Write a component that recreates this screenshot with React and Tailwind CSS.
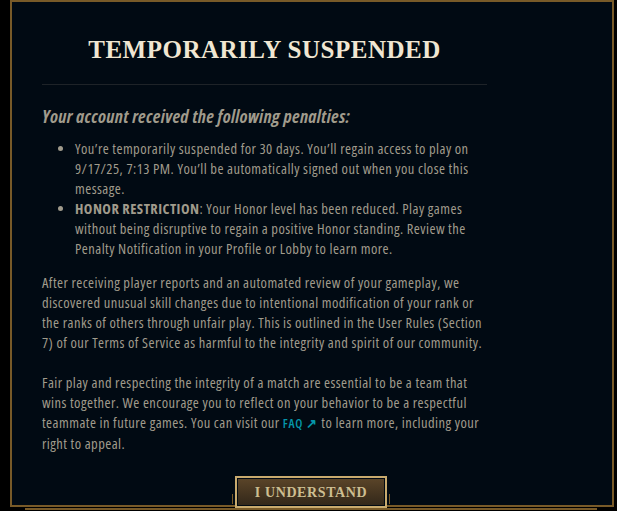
import React from 'react';

export default function App() {
  return (
    <div className="w-[617px] h-[511px] bg-black relative overflow-hidden">
      {/* Frame */}
      <div className="ml-[10px] w-[604px] h-[507px] border-2 border-[#785a28] bg-[#010a13]">
        <div className="pl-[30px] pr-[125px] pt-[30px]">
          <h1 className="text-center font-['Liberation_Serif',serif] text-[25px] leading-[36px] font-bold tracking-[0.5px] text-[#f0e6d2]">
            TEMPORARILY SUSPENDED
          </h1>
          <div className="mt-[16px] h-px bg-[#1e2328]" />

          <h2 className="mt-[20px] font-['Open_Sans',sans-serif] font-stretch-condensed text-[18px] leading-[22px] font-bold italic tracking-[0.3px] text-[#a09b8c]">
            Your account received the following penalties:
          </h2>

          <ul className="mt-[12px] pl-[33px] list-disc font-['Open_Sans',sans-serif] font-stretch-condensed text-[14.5px] leading-[20px] tracking-[0.45px] text-[#a09b8c]">
            <li>
              You’re temporarily suspended for 30 days. You’ll regain access to play on 9/17/25, 7:13 PM. You’ll be
              automatically signed out when you close this message.
            </li>
            <li>
              <span className="font-bold">HONOR RESTRICTION</span>: Your Honor level has been reduced. Play games without
              being disruptive to regain a positive Honor standing. Review the Penalty Notification in your Profile or
              Lobby to learn more.
            </li>
          </ul>

          <p className="mt-[14px] font-['Open_Sans',sans-serif] font-stretch-condensed text-[14.5px] leading-[20px] tracking-[0.45px] text-[#a09b8c]">
            After receiving player reports and an automated review of your gameplay, we discovered unusual skill changes
            due to intentional modification of your rank or the ranks of others through unfair play. This is outlined in
            the User Rules (Section 7) of our Terms of Service as harmful to the integrity and spirit of our community.
          </p>
          <p className="mt-[20px] font-['Open_Sans',sans-serif] font-stretch-condensed text-[14.5px] leading-[20px] tracking-[0.45px] text-[#a09b8c]">
            Fair play and respecting the integrity of a match are essential to be a team that wins together. We
            encourage you to reflect on your behavior to be a respectful teammate in future games. You can visit our{' '}
            <a className="text-[12.5px] font-semibold tracking-[0.8px] text-[#0596aa]">FAQ ↗</a> to learn more, including
            your right to appeal.
          </p>
        </div>
      </div>

      {/* bottom trim line */}
      <div className="absolute left-[25px] right-[20px] top-[508px] h-[2px] bg-[#785a28]" />

      {/* Button */}
      <div className="absolute left-[232px] top-[476px] flex items-end">
        <div className="w-px h-[10px] bg-[#785a28] mb-[4px]" />
        <button className="mx-[2px] w-[152px] h-[32px] border-2 border-[#c8aa6e] p-px bg-[#010a13]">
          <div className="h-full flex items-center justify-center bg-gradient-to-b from-[#5a4428] to-[#33281a] font-['Liberation_Serif',serif] text-[14px] font-bold tracking-[0.6px] text-[#cdbe91]">
            I UNDERSTAND
          </div>
        </button>
        <div className="w-px h-[10px] bg-[#785a28] mb-[4px]" />
      </div>
    </div>
  );
}
